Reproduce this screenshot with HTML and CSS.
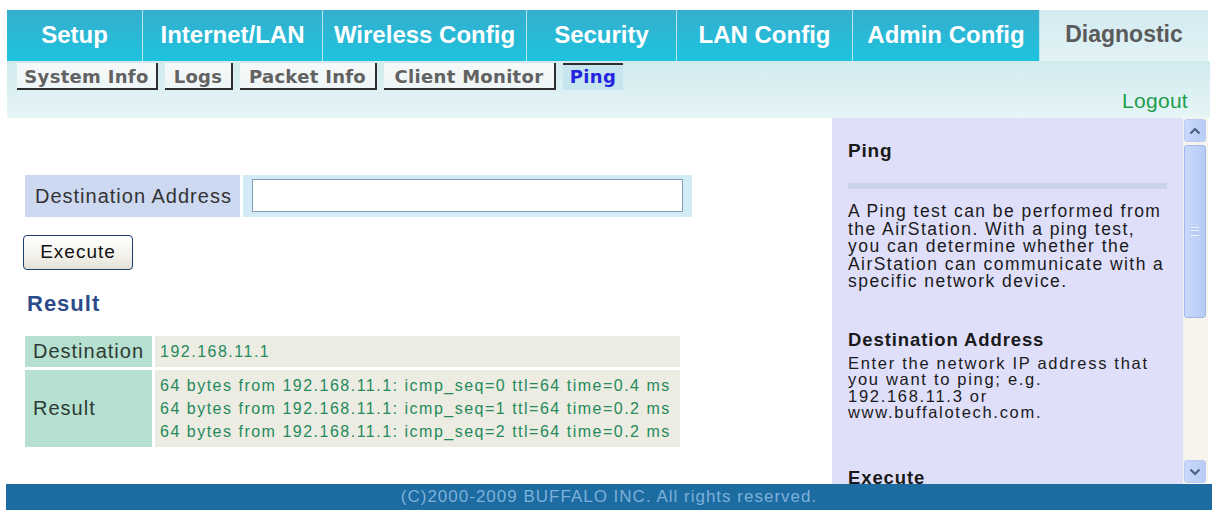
FILE: index.html
```html
<!DOCTYPE html>
<html>
<head>
<meta charset="utf-8">
<title>Diagnostic - Ping</title>
<link rel="stylesheet" href="styles.css">
</head>
<body>
<div class="page">
  <div class="tabs">
    <div class="tab w1">Setup</div>
    <div class="tab w2">Internet/LAN</div>
    <div class="tab w3">Wireless Config</div>
    <div class="tab w4">Security</div>
    <div class="tab w5">LAN Config</div>
    <div class="tab w6">Admin Config</div>
    <div class="tab active w7">Diagnostic</div>
  </div>
  <div class="subnav">
    <div class="subtabs">
      <span class="sub s1">System Info</span>
      <span class="sub s2">Logs</span>
      <span class="sub s3">Packet Info</span>
      <span class="sub s4">Client Monitor</span>
      <span class="sub current s5">Ping</span>
    </div>
    <div class="logout">Logout</div>
  </div>
  <div class="main">
    <div class="content">
      <div class="form-row">
        <div class="form-label">Destination Address</div>
        <div class="form-field"><div class="input"></div></div>
      </div>
      <div class="btn">Execute</div>
      <div class="result-title">Result</div>
      <div class="result">
        <div class="rrow">
          <div class="rlabel">Destination</div>
          <div class="rvalue">192.168.11.1</div>
        </div>
        <div class="rrow">
          <div class="rlabel">Result</div>
          <div class="rvalue">64 bytes from 192.168.11.1: icmp_seq=0 ttl=64 time=0.4 ms<br>64 bytes from 192.168.11.1: icmp_seq=1 ttl=64 time=0.2 ms<br>64 bytes from 192.168.11.1: icmp_seq=2 ttl=64 time=0.2 ms</div>
        </div>
      </div>
    </div>
    <div class="help">
      <div class="help-body">
        <div class="h-title">Ping</div>
        <div class="h-bar"></div>
        <p class="h-text">A Ping test can be performed from the AirStation. With a ping test, you can determine whether the AirStation can communicate with a specific network device.</p>
        <div class="h-head">Destination Address</div>
        <p class="h-text">Enter the network IP address that you want to ping; e.g.<br>192.168.11.3 or<br>www.buffalotech.com.</p>
        <div class="h-head h-exec">Execute</div>
      </div>
      <div class="scroll">
        <div class="sbtn up"><svg width="12" height="8" viewBox="0 0 12 8"><path d="M1.5 6.5 L6 2 L10.5 6.5" fill="none" stroke="#4d6185" stroke-width="2.2"/></svg></div>
        <div class="thumb"><span class="grip"></span></div>
        <div class="track"></div>
        <div class="sbtn down"><svg width="12" height="8" viewBox="0 0 12 8"><path d="M1.5 1.5 L6 6 L10.5 1.5" fill="none" stroke="#4d6185" stroke-width="2.2"/></svg></div>
      </div>
    </div>
  </div>
  <div class="footer">(C)2000-2009 BUFFALO INC. All rights reserved.</div>
</div>
</body>
</html>
```
FILE: styles.css
```css
html, body {
  margin: 0;
  padding: 0;
  background: #ffffff;
  font-family: "Liberation Sans", Arial, sans-serif;
}
.page {
  width: 1212px;
  height: 510px;
  overflow: hidden;
  padding-top: 10px;
  box-sizing: border-box;
  display: flex;
  flex-direction: column;
}
.tabs {
  display: flex;
  height: 51px;
  margin-left: 7px;
  width: 1201px;
  background: linear-gradient(#36aecd, #1dc3df);
}
.tab {
  box-sizing: border-box;
  height: 51px;
  border-right: 1px solid #b8e6ef;
  color: #ffffff;
  font-weight: bold;
  font-size: 24px;
  text-align: center;
  line-height: 49px;
}
.tab.active {
  border-right: none;
  color: #5a5a5a;
  background: linear-gradient(#d3eaf0, #e2f3f6);
  font-size: 23px;
}
.w1 { width: 136px; }
.w2 { width: 180px; }
.w3 { width: 204px; }
.w4 { width: 150px; }
.w5 { width: 176px; }
.w6 { width: 187px; }
.w7 { width: 168px; }
.subnav {
  margin-left: 7px;
  width: 1203px;
  height: 57px;
  background: linear-gradient(#d2eaef, #e6f5f6);
  border-bottom: 1px solid #eaf7f6;
  box-sizing: border-box;
  position: relative;
}
.subtabs {
  display: flex;
  gap: 7px;
  padding: 2px 0 0 10px;
}
.sub {
  box-sizing: border-box;
  height: 27px;
  line-height: 27px;
  font-family: "DejaVu Sans", Verdana, sans-serif;
  font-weight: bold;
  font-size: 18px;
  letter-spacing: 0.3px;
  color: #626262;
  text-align: center;
  background: linear-gradient(#f6f9f9, #eef5f6);
  border-right: 2px solid #2e2e2e;
  border-bottom: 2px solid #2e2e2e;
  white-space: nowrap;
}
.s1 { width: 141px; }
.s2 { width: 68px; }
.s3 { width: 137px; }
.s4 { width: 172px; }
.s5 { width: 60px; }
.sub.current {
  background: #c7e5ee;
  color: #2424e0;
  border: none;
  border-top: 2px solid #2e2e2e;
  line-height: 24px;
}
.logout {
  position: absolute;
  right: 22px;
  bottom: 4px;
  color: #1c9e4a;
  font-size: 21px;
  letter-spacing: 0.3px;
}
.main {
  flex: 1;
  display: flex;
  min-height: 0;
}
.content {
  width: 825px;
  margin-left: 7px;
  padding: 57px 0 0 18px;
  box-sizing: border-box;
}
.form-row {
  display: flex;
  gap: 3px;
  height: 42px;
  width: 667px;
}
.form-label {
  width: 215px;
  background: #cdd8f1;
  color: #333333;
  font-size: 20px;
  letter-spacing: 1px;
  line-height: 42px;
  padding-left: 10px;
  box-sizing: border-box;
  white-space: nowrap;
}
.form-field {
  flex: 1;
  background: #d3ebf5;
  padding: 4px 9px 0 9px;
}
.input {
  height: 33px;
  box-sizing: border-box;
  border: 1px solid #7f9db9;
  background: #ffffff;
}
.btn {
  margin: 18px 0 0 -2px;
  width: 110px;
  height: 35px;
  box-sizing: border-box;
  border: 1px solid #1c3f70;
  border-radius: 4px;
  background: linear-gradient(#ffffff, #f2f1ea 60%, #e4e2d6);
  font-size: 19px;
  letter-spacing: 1px;
  color: #111111;
  text-align: center;
  line-height: 32px;
}
.result-title {
  margin-top: 19px;
  color: #2b4b89;
  font-weight: bold;
  font-size: 22px;
  letter-spacing: 1px;
  padding-left: 2px;
  line-height: 30px;
}
.result {
  margin-top: 17px;
  width: 655px;
  display: flex;
  flex-direction: column;
  gap: 3px;
}
.rrow {
  display: flex;
  gap: 3px;
}
.rlabel {
  width: 127px;
  background: #b6e1d0;
  color: #2e3a34;
  font-size: 20px;
  letter-spacing: 1px;
  padding-left: 8px;
  box-sizing: border-box;
  display: flex;
  align-items: center;
}
.rvalue {
  flex: 1;
  background: #ecece3;
  color: #258a5c;
  font-size: 16px;
  letter-spacing: 1.5px;
  line-height: 23px;
  padding: 4px 5px;
  white-space: nowrap;
}
.rrow:first-child .rvalue,
.rrow:first-child .rlabel {
  height: 31px;
  padding-top: 0;
  padding-bottom: 0;
  line-height: 31px;
}
.help {
  width: 376px;
  display: flex;
}
.help-body {
  width: 351px;
  background: #dfdffa;
  padding: 20px 16px 0 16px;
  box-sizing: border-box;
  overflow: hidden;
  color: #1a1a1a;
}
.h-title {
  font-weight: bold;
  font-size: 19px;
  letter-spacing: 0.8px;
  line-height: 26px;
}
.h-bar {
  height: 6px;
  margin-top: 19px;
  background: #cbd3e9;
}
.h-text {
  margin: 14px 0 0 0;
  font-size: 17.5px;
  letter-spacing: 1.45px;
  line-height: 17.5px;
}
.h-head {
  margin-top: 38px;
  font-weight: bold;
  font-size: 18.5px;
  letter-spacing: 0.9px;
  line-height: 22px;
}
.h-head + .h-text {
  margin-top: 4px;
  font-size: 16.5px;
  letter-spacing: 1.7px;
  line-height: 16.5px;
}
.h-exec {
  margin-top: 46px;
}
.scroll {
  width: 25px;
  background: #f6f4ec;
  display: flex;
  flex-direction: column;
  padding: 1px 0 1px 1px;
  box-sizing: border-box;
}
.sbtn {
  height: 23px;
  width: 22px;
  box-sizing: border-box;
  border: 1px solid #b9cdf4;
  border-radius: 3px;
  background: linear-gradient(90deg, #cbd9fb, #b8ccf6);
  display: flex;
  align-items: center;
  justify-content: center;
}
.thumb {
  margin-top: 3px;
  height: 173px;
  width: 22px;
  box-sizing: border-box;
  border: 1px solid #9fb7ea;
  border-radius: 3px;
  background: linear-gradient(90deg, #c9d8fb, #b7cbf6);
  display: flex;
  align-items: center;
  justify-content: center;
}
.grip {
  width: 8px;
  height: 7px;
  border-top: 1px solid #eef3fe;
  border-bottom: 1px solid #eef3fe;
  background: linear-gradient(#b7cbf6 0 2px, #eef3fe 2px 3px, #b7cbf6 3px 100%);
}
.track { flex: 1; }
.footer {
  margin-left: 6px;
  height: 26px;
  flex: none;
  background: #1c6ba1;
  color: #7cb1da;
  font-size: 17px;
  letter-spacing: 1px;
  text-align: center;
  line-height: 25px;
}
```
